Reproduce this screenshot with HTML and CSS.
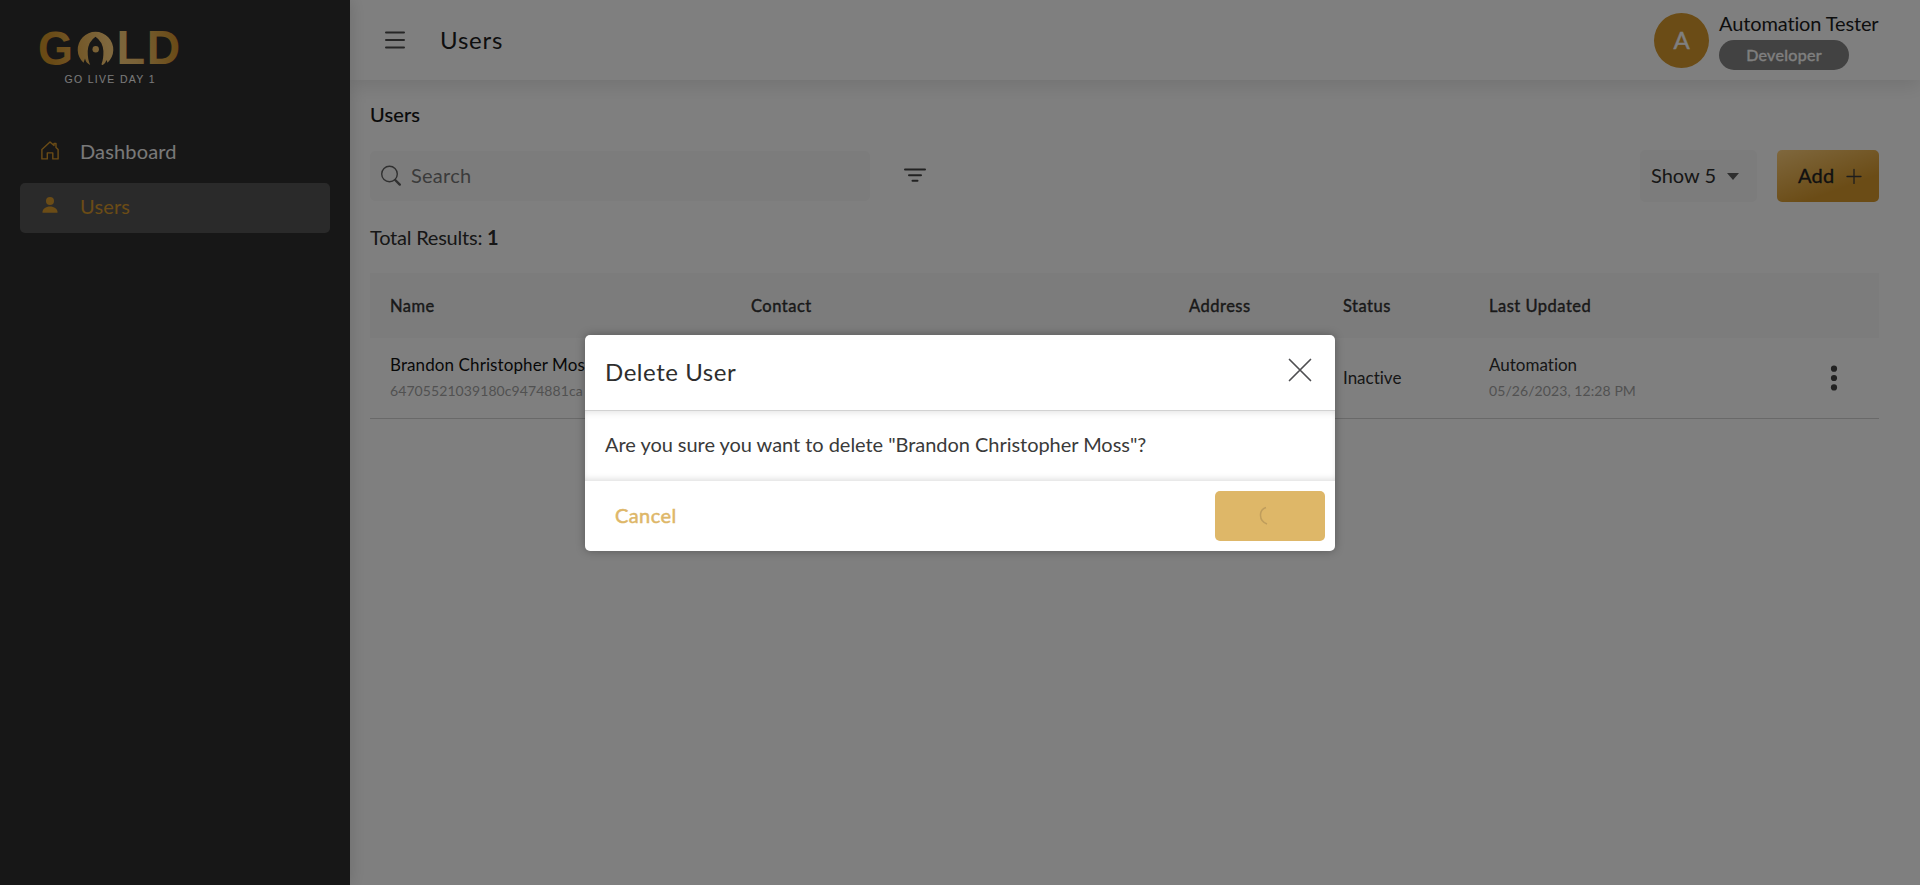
FILE: index.html
```html
<!DOCTYPE html>
<html lang="en">
<head>
<meta charset="utf-8">
<title>Users</title>
<link rel="stylesheet" href="styles.css">
</head>
<body>
<div class="app">
  <aside class="sidebar">
    <svg class="logo" width="150" height="65" viewBox="30 25 150 65">
      <defs>
        <linearGradient id="gold" gradientUnits="userSpaceOnUse" x1="40" y1="60" x2="178" y2="40">
          <stop offset="0" stop-color="#d2942b"/><stop offset=".08" stop-color="#d2942b"/>
          <stop offset=".5" stop-color="#ffd07c"/><stop offset=".68" stop-color="#f5c671"/><stop offset="1" stop-color="#d2942b"/>
        </linearGradient>
      </defs>
      <g class="logo-word" fill="url(#gold)">
        <text x="38" y="64.500" textLength="35" lengthAdjust="spacingAndGlyphs">G</text>
        <text x="116.600" y="63.500" textLength="28.600" lengthAdjust="spacingAndGlyphs">L</text>
        <text x="146.700" y="63.500" textLength="33.400" lengthAdjust="spacingAndGlyphs">D</text>
        <path d="M83.5 62.8 A17.8 17.8 0 1 1 107.5 62.8 L106.5 60 Q105.5 63.5 102.8 65 Q101 65 101.6 63.8 Q103.6 59 103.4 51 Q102.6 41.5 95.5 36.8 Q88.4 41.5 87.7 51 Q87.5 59 90.2 65 Q86 63 85 58.5 Z"/>
        <circle cx="95.700" cy="49.300" r="3.200"/>
      </g>
      <text class="logo-tag" x="64.500" y="82.500" textLength="90">GO LIVE DAY 1</text>
    </svg>
    <nav class="nav">
      <a class="nav-item">
        <svg class="nav-icon" width="18" height="19" viewBox="0 0 18 19" fill="none" stroke="#d6982c" stroke-width="1.400" stroke-linejoin="round"><path d="M.9 8.400 9 .9l4 3.700V2.500h2v3.900l2.100 2v9.500h-5.300v-6H6.300v6H.9z"/></svg>
        <span class="nav-label">Dashboard</span>
      </a>
      <a class="nav-item active">
        <svg class="nav-icon" width="18" height="18" viewBox="0 0 18 18" fill="#d6982c"><circle cx="9" cy="5" r="4"/><path d="M1.500 16.800c-.5-4 3.500-6.400 7.500-6.400s8 2.400 7.500 6.400z"/></svg>
        <span class="nav-label">Users</span>
      </a>
    </nav>
  </aside>
  <div class="page">
    <header class="topbar">
      <svg class="menu" width="22" height="20" viewBox="0 0 22 20" stroke="#4c4c4c" stroke-width="2" stroke-linecap="round"><path d="M2 2.500h18M2 10h18M2 17.500h18"/></svg>
      <h1 class="page-title">Users</h1>
      <div class="avatar"><span>A</span></div>
      <div class="who">
        <span class="who-name">Automation Tester</span>
        <span class="badge">Developer</span>
      </div>
    </header>
    <main class="content">
      <h2 class="section">Users</h2>
      <div class="tools">
        <div class="search">
          <svg width="22" height="22" viewBox="0 0 22 22" fill="none" stroke="#606060" stroke-linecap="round"><circle cx="9.500" cy="9" r="7.800" stroke-width="1.400"/><path d="m15.200 15 4.600 4.600" stroke-width="2.400"/></svg>
          <span class="search-text">Search</span>
        </div>
        <svg class="filter" width="22" height="16" viewBox="0 0 22 16" stroke="#444" stroke-width="2" stroke-linecap="round"><path d="M1 1.500h20M5 7.200h12M8.500 12.800h5"/></svg>
        <div class="show"><span class="show-text">Show 5</span><svg width="12" height="7" viewBox="0 0 12 7" fill="#5c5c5c"><path d="M0 0h12L6 7z"/></svg></div>
        <div class="add"><span class="add-text">Add</span><svg width="16" height="16" viewBox="0 0 16 16" stroke="#3a3a3a" stroke-width="1.300" stroke-linecap="round"><path d="M1 8.500h14M8 1.500v14"/></svg></div>
      </div>
      <p class="total">Total Results: <b>1</b></p>
      <div class="row head">
        <span>Name</span><span>Contact</span><span>Address</span><span>Status</span><span>Last Updated</span><span></span>
      </div>
      <div class="row body">
        <div class="cell"><span class="strong">Brandon Christopher Moss</span><span class="sub">64705521039180c9474881ca</span></div>
        <div></div><div></div>
        <div class="cell"><span>Inactive</span></div>
        <div class="cell"><span>Automation</span><span class="sub">05/26/2023, 12:28 PM</span></div>
        <svg class="kebab" width="8" height="26" viewBox="0 0 8 26" fill="#444"><circle cx="4" cy="3.700" r="3.100"/><circle cx="4" cy="13" r="3.100"/><circle cx="4" cy="22.400" r="3.100"/></svg>
      </div>
    </main>
  </div>
</div>
<div class="overlay">
  <section class="modal">
    <header class="modal-head">
      <h3 class="modal-title">Delete User</h3>
      <svg class="close" width="24" height="24" viewBox="0 0 24 24" stroke="#4f4f52" stroke-width="1.700" stroke-linecap="round"><path d="m1.500 1.500 21 21M22.500 1.500l-21 21"/></svg>
    </header>
    <div class="modal-body">Are you sure you want to delete "Brandon Christopher Moss"?</div>
    <footer class="modal-foot">
      <span class="cancel">Cancel</span>
      <div class="confirm"><svg width="20" height="20" viewBox="0 0 20 20" fill="none" stroke="#bf9d5c" stroke-width="1.500"><path d="M7 1.500C-.5 4-.5 15 8 18"/></svg></div>
    </footer>
  </section>
</div>
</body>
</html>
```
FILE: styles.css
```css
* { box-sizing: border-box; margin: 0; padding: 0; }
body { font-family: Lato, "Open Sans", sans-serif; font-size: 20px; line-height: 24px; color: #2e2e2e; background: #fff; overflow: hidden; font-variant-ligatures: none; }
.app { display: flex; height: 885px; }
.sidebar { width: 350px; flex: none; background: #2e2e2e; box-shadow: 0 0 16px rgba(0,0,0,.16); z-index: 2; padding: 25px 20px 0; }
.logo { display: block; margin-left: 10px; overflow: visible; }
.logo-word { font: bold 48px "Liberation Sans", sans-serif; }
.logo-tag { font: 10.500px "Liberation Sans", sans-serif; fill: #f4f4f4; }
.nav { padding-top: 38px; }
.nav-item { display: flex; height: 50px; margin-bottom: 5px; padding-left: 21px; border-radius: 5px; color: #f2f2f2; letter-spacing: .15px; }
.nav-item.active { background: #545454; color: #d6982c; }
.nav-icon { margin-top: 13px; margin-right: 21px; }
.nav-label { line-height: 47px; }
.page { flex: 1; display: flex; flex-direction: column; }
.topbar { height: 80px; flex: none; display: flex; align-items: center; padding: 0 41px 0 34px; background: #fff; box-shadow: 0 6px 18px rgba(0,0,0,.1); }
.page-title { font-size: 24px; font-weight: 400; margin-left: 34px; margin-right: auto; color: #1c1c1c; letter-spacing: .8px; }
.avatar { width: 55px; height: 55px; border-radius: 50%; background: #d6982c; color: #fff; font-size: 24px; -webkit-text-stroke: .4px; display: flex; align-items: center; justify-content: center; }
.avatar span { margin-top: -1px; }
.who { width: 160px; margin-left: 10px; display: flex; flex-direction: column; padding-bottom: 1px; }
.who-name { line-height: 27px; height: 30px; white-space: nowrap; color: #1c1c1c; letter-spacing: -.13px; }
.badge { width: 130px; height: 30px; border-radius: 15px; background: #848484; color: #fff; font-size: 16px; -webkit-text-stroke: .4px; letter-spacing: .3px; line-height: 29px; text-align: center; }
.content { padding: 22px 41px 0 20px; }
.section { font-size: 20px; font-weight: 400; color: #111; -webkit-text-stroke: .2px; letter-spacing: .15px; }
.tools { display: flex; align-items: center; margin-top: 24px; height: 52px; }
.search { width: 500px; height: 50px; border-radius: 5px; background: #f9f9f9; display: flex; align-items: center; padding-left: 10px; gap: 9px; }
.search-text, .show-text, .add-text { margin-top: -2px; letter-spacing: .25px; }
.search-text { color: #777; }
.filter { margin-left: 34px; margin-right: auto; }
.show { width: 117px; height: 52px; border-radius: 5px; background: #f9f9f9; display: flex; align-items: center; padding: 0 18px 0 11px; justify-content: space-between; }
.show-text { letter-spacing: 0; }
.add { width: 102px; height: 52px; margin-left: 20px; border-radius: 5px; background: linear-gradient(160deg, #ffd07c 0%, #d6982c 70%); display: flex; align-items: center; justify-content: space-between; padding: 0 17px 0 21px; color: #222; -webkit-text-stroke: .3px; }
.total { margin-top: 23px; letter-spacing: -.22px; }
.row { display: grid; grid-template-columns: 361px 438px 154px 146px 341px 1fr; padding-left: 20px; font-size: 17px; align-items: center; }
.head { height: 65px; margin-top: 24px; background: #f9f9f9; color: #333; font-size: 16.500px; -webkit-text-stroke: .4px; letter-spacing: .5px; }
.body { height: 81px; border-bottom: 1px solid #d2d2d2; }
.cell { display: flex; flex-direction: column; white-space: nowrap; }
.strong { color: #111; letter-spacing: .1px; }
.sub { font-size: 14px; color: #a3a3a3; line-height: 27px; letter-spacing: .08px; }
.overlay { position: absolute; inset: 0; z-index: 5; background: rgba(0,0,0,.5); display: flex; justify-content: center; align-items: center; }
.modal { width: 750px; height: 216px; background: #fff; border-radius: 5px; box-shadow: 0 0 10px rgba(0,0,0,.3); overflow: hidden; }
.modal-head { height: 76px; border-bottom: 1px solid #d2d2d2; display: flex; justify-content: space-between; padding: 0 23px 0 20px; }
.modal-title { font-size: 24px; font-weight: 400; line-height: 74px; letter-spacing: .55px; }
.close { margin-top: 23px; }
.modal-body { height: 70px; line-height: 67px; padding-left: 20px; color: #3a3a3a; letter-spacing: -.04px; box-shadow: inset 0 5px 6px -3px rgba(0,0,0,.1), inset 0 -5px 6px -3px rgba(0,0,0,.13); }
.modal-foot { height: 70px; display: flex; align-items: center; justify-content: space-between; padding: 0 10px 0 30px; }
.cancel { color: #deb768; -webkit-text-stroke: .5px; letter-spacing: .4px; margin-top: -2px; }
.confirm { width: 110px; height: 50px; border-radius: 5px; background: #deb768; display: flex; align-items: center; padding-left: 44px; }
```
